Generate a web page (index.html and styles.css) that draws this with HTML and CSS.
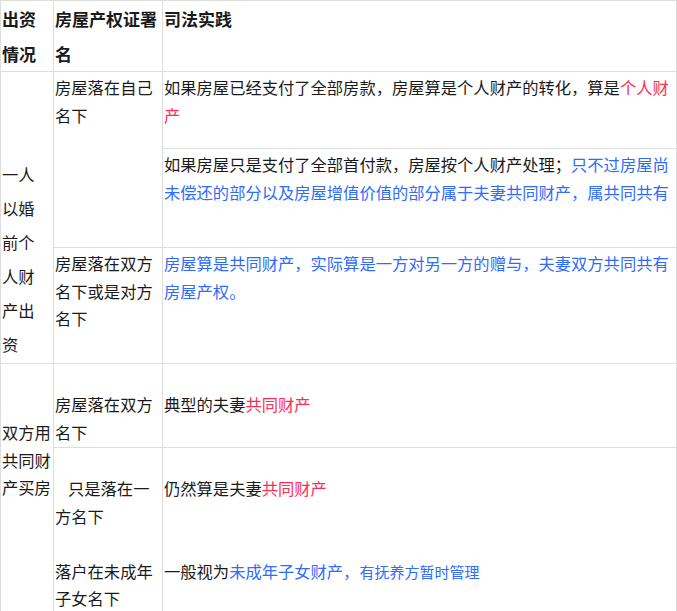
FILE: index.html
```html
<!DOCTYPE html>
<html lang="zh-CN">
  <head>
    <meta charset="UTF-8" />
    <meta name="viewport" content="width=device-width, initial-scale=1.0" />
    <title>房屋出资与产权</title>
    <link rel="stylesheet" href="styles.css">
  </head>
  <body>
    <table class="house-table">
      <colgroup>
        <col class="col-source" />
        <col class="col-name" />
        <col class="col-practice" />
      </colgroup>
      <tr class="row-head">
        <th>出资<br />情况</th>
        <th>房屋产权证署名</th>
        <th>司法实践</th>
      </tr>
      <tr class="row-own-a">
        <td class="source source-single" rowspan="3">一人<br />以婚<br />前个<br />人财<br />产出<br />资</td>
        <td rowspan="2">房屋落在自己名下</td>
        <td class="tight">如果房屋已经支付了全部房款，房屋算是个人财产的转化，算是<span class="red">个人财产</span></td>
      </tr>
      <tr class="row-own-b">
        <td>如果房屋只是支付了全部首付款，房屋按个人财产处理；<span class="blue">只不过房屋尚未偿还的部分以及房屋增值价值的部分属于夫妻共同财产，属共同共有</span></td>
      </tr>
      <tr class="row-both">
        <td>房屋落在双方名下或是对方名下</td>
        <td class="blue">房屋算是共同财产，实际算是一方对另一方的赠与，夫妻双方共同共有房屋产权。</td>
      </tr>
      <tr class="row-joint-a">
        <td class="source source-joint" rowspan="2">双方用<br />共同财<br />产买房</td>
        <td class="pad-line">房屋落在双方名下</td>
        <td class="pad-line">典型的夫妻<span class="red">共同财产</span></td>
      </tr>
      <tr class="row-joint-b">
        <td class="pad-line">
          <p class="indent">只是落在一方名下</p>
          <p class="gap-one">落户在未成年子女名下</p>
        </td>
        <td class="pad-line">
          <p>仍然算是夫妻<span class="red">共同财产</span></p>
          <p class="gap-two">一般视为<span class="blue">未成年子女财产，<span class="small">有抚养方暂时管理</span></span></p>
        </td>
      </tr>
    </table>
  </body>
</html>
```

FILE: styles.css
```css
body {
  margin: 0;
  background: #fff;
  font-family: "Noto Sans CJK SC", "Noto Sans", sans-serif;
  color: #1a1a1a;
}

.house-table {
  border-collapse: collapse;
  table-layout: fixed;
  width: 677px;
  font-size: 16.3px;
  line-height: 27.5px;
}
.house-table .col-source {
  width: 53px;
}
.house-table .col-name {
  width: 109px;
}
.house-table th,
.house-table td {
  border: 1px solid #ddd;
  padding: 2px 0 0 1px;
  text-align: left;
  vertical-align: top;
}
.house-table th {
  font-size: 17px;
  font-weight: 700;
  line-height: 35px;
  padding-top: 0;
}
.house-table p {
  margin: 0;
}

.row-head {
  height: 71px;
}
.row-own-a {
  height: 77px;
}
.row-own-b {
  height: 99px;
}
.row-both {
  height: 116px;
}
.row-joint-a {
  height: 84px;
}
.row-joint-b {
  height: 163px;
}

.house-table .tight {
  padding-right: 6px;
}
.house-table .source-single {
  line-height: 34px;
  vertical-align: bottom;
  padding-bottom: 2px;
}
.house-table .source-joint {
  padding-top: 55px;
}
.house-table .pad-line {
  padding-top: 27px;
}
.house-table .indent {
  text-indent: 13px;
}
.house-table .gap-one {
  margin-top: 27.5px;
}
.house-table .gap-two {
  margin-top: 55px;
}

.red {
  color: #ff2d55;
}
.blue {
  color: #2f6bff;
}
.small {
  font-size: 15px;
}
```
